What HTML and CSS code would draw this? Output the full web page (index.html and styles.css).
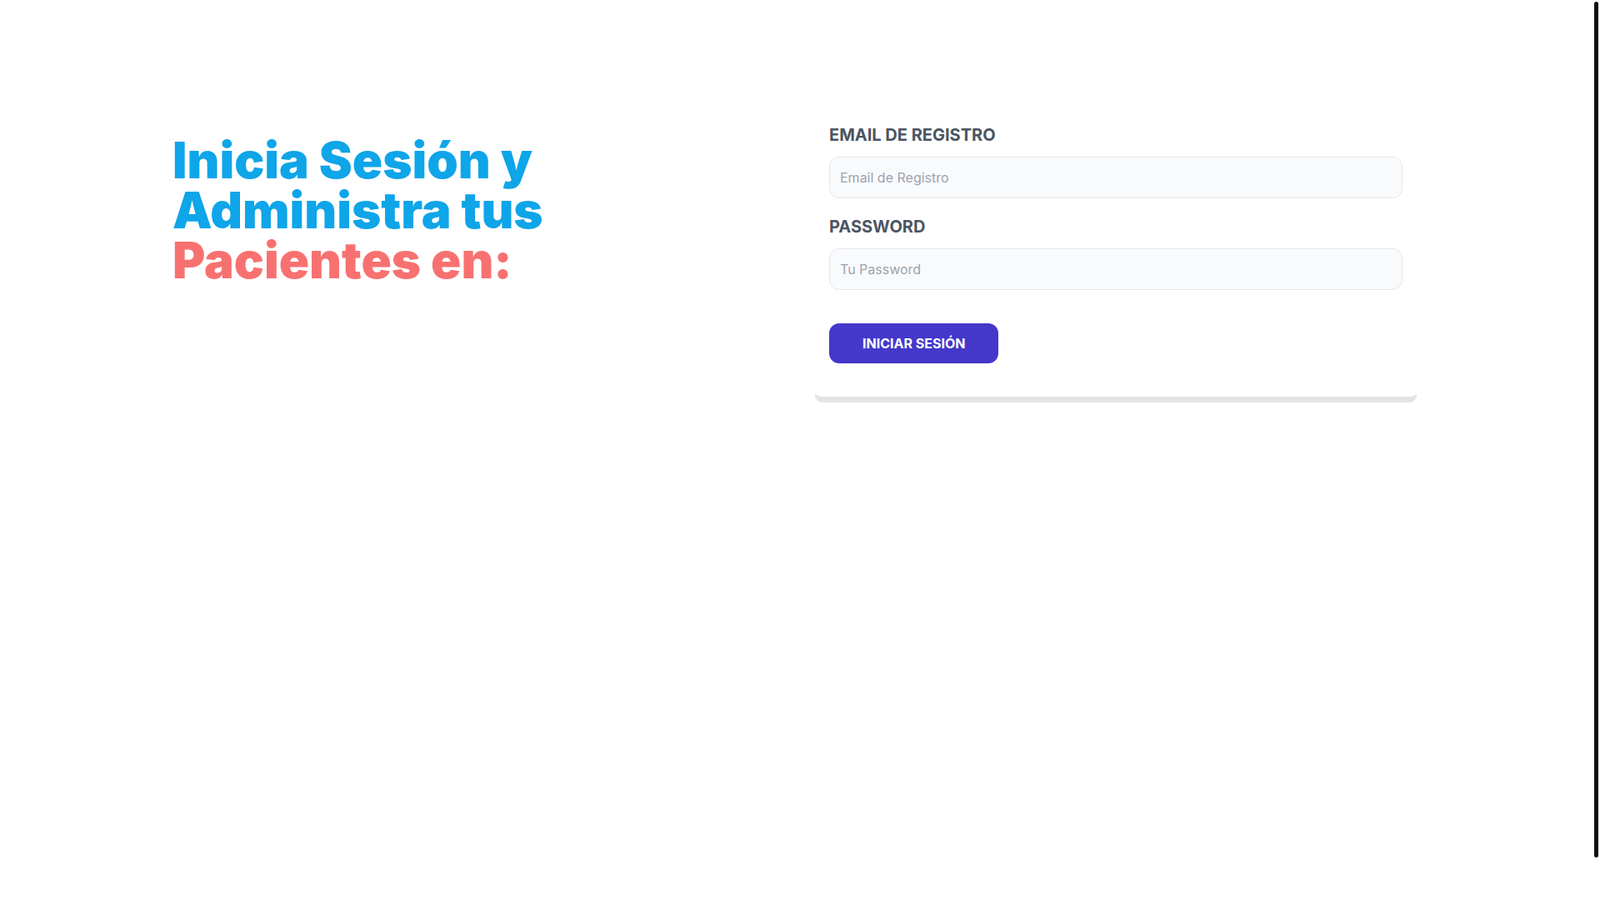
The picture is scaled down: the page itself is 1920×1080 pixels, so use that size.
FILE: index.html
```html
<!DOCTYPE html>
<html lang="es">
<head>
<meta charset="utf-8">
<title>Iniciar Sesión</title>
<link rel="stylesheet" href="styles.css">
</head>
<body>
<div class="page">
  <main class="main">
    <div class="container">
      <div class="intro">
        <h1 class="title">
          <span class="line">Inicia Sesión y</span>
          <span class="line">Administra tus</span>
          <span class="line accent">Pacientes en:</span>
        </h1>
      </div>
      <div class="card">
        <form class="form">
          <div class="field">
            <label class="label" for="email">Email de Registro</label>
            <input class="input" id="email" type="email" placeholder="Email de Registro">
          </div>
          <div class="field">
            <label class="label" for="password">Password</label>
            <input class="input" id="password" type="password" placeholder="Tu Password">
          </div>
          <button class="submit" type="button">Iniciar Sesión</button>
        </form>
      </div>
    </div>
  </main>
  <aside class="scrollbar"><div class="thumb"></div></aside>
</div>
</body>
</html>
```

FILE: styles.css
```css
* { box-sizing: border-box; }
html, body { margin: 0; padding: 0; height: 100%; background: #ffffff; }
body { font-family: Inter, "Noto Sans", "Liberation Sans", sans-serif; overflow: hidden; }

.page { display: flex; height: 100vh; }
.main { flex: 1; min-width: 0; }

.container {
  max-width: 1536px;
  margin: 48px auto 0;
  padding: 20px;
  display: grid;
  grid-template-columns: 1fr 1fr;
  column-gap: 40px;
  align-items: start;
}

.intro { padding-top: 94px; }
.title {
  margin: 0;
  font-weight: 900;
  font-size: 60px;
  line-height: 60px;
  color: #0ea5e9;
}
.line { display: block; }
.accent { color: #f87171; }

.card {
  margin-top: 20px;
  padding: 40px 20px;
  background: #ffffff;
  border-radius: 12px;
  box-shadow: 0 10px 0 -3px #e4e4e4;
}

.field { margin: 20px 0; }
.label {
  display: block;
  font-size: 20px;
  line-height: 28px;
  font-weight: 700;
  text-transform: uppercase;
  color: #4b5563;
}
.input {
  display: block;
  width: 100%;
  margin-top: 12px;
  padding: 12px;
  font-family: inherit;
  font-size: 16px;
  line-height: 24px;
  height: 50px;
  color: #111827;
  background: #f9fafb;
  border: 1px solid #e5e7eb;
  border-radius: 12px;
  outline: none;
}
.input::placeholder { color: #9ca3af; }

.submit {
  display: block;
  margin-top: 40px;
  padding: 12px 40px;
  font-family: inherit;
  font-size: 16px;
  line-height: 24px;
  font-weight: 700;
  text-transform: uppercase;
  color: #ffffff;
  background: #4338ca;
  border: 0;
  border-radius: 12px;
}

.scrollbar { width: 10px; flex: none; background: #ffffff; }
.thumb {
  margin: 2px 2px 0 3px;
  height: 1027px;
  background: #111111;
  border-radius: 3px;
}
```
